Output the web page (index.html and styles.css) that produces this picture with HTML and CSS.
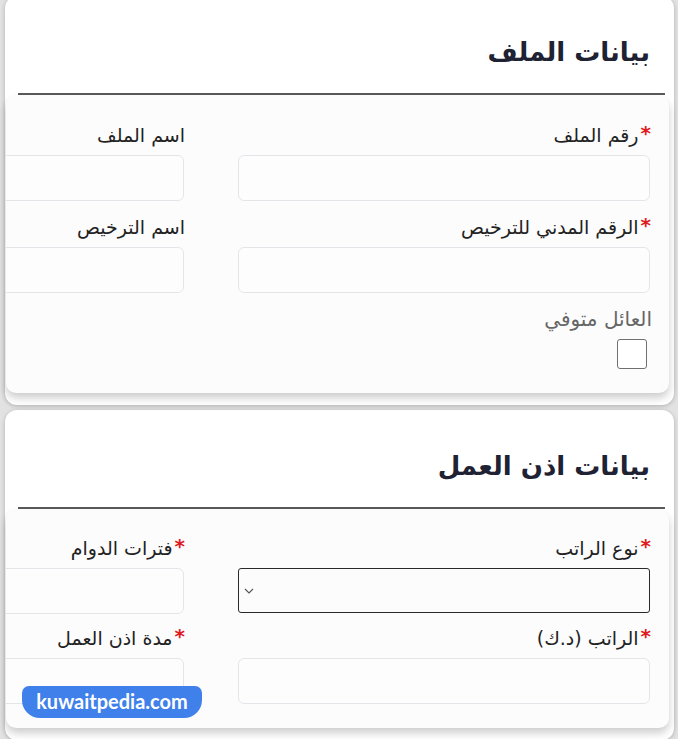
FILE: index.html
```html
<!DOCTYPE html>
<html lang="ar" dir="rtl">
<head>
<meta charset="utf-8">
<title>بيانات الملف</title>
<link rel="stylesheet" href="styles.css">
</head>
<body>
<main class="page">
  <section class="card card-first">
    <h2 class="card-title">بيانات الملف</h2>
    <div class="divider"></div>
    <div class="panel">
      <div class="grid">
        <div class="field">
          <label class="label"><span class="req">*</span>رقم الملف</label>
          <div class="input"></div>
        </div>
        <div class="field">
          <label class="label">اسم الملف</label>
          <div class="input"></div>
        </div>
        <div class="field">
          <label class="label"><span class="req">*</span>الرقم المدني للترخيص</label>
          <div class="input"></div>
        </div>
        <div class="field">
          <label class="label">اسم الترخيص</label>
          <div class="input"></div>
        </div>
        <div class="field">
          <label class="label muted">العائل متوفي</label>
          <div class="checkbox"></div>
        </div>
      </div>
    </div>
  </section>

  <section class="card">
    <h2 class="card-title">بيانات اذن العمل</h2>
    <div class="divider"></div>
    <div class="panel panel-last">
      <div class="grid grid-tight">
        <div class="field">
          <label class="label"><span class="req">*</span>نوع الراتب</label>
          <div class="select">
            <svg class="chevron" width="10" height="6" viewBox="0 0 10 6"><path d="M1 1 L5 5 L9 1" fill="none" stroke="#555" stroke-width="1.1"/></svg>
          </div>
        </div>
        <div class="field">
          <label class="label"><span class="req">*</span>فترات الدوام</label>
          <div class="input"></div>
        </div>
        <div class="field">
          <label class="label"><span class="req">*</span>الراتب (د.ك)</label>
          <div class="input"></div>
        </div>
        <div class="field">
          <label class="label"><span class="req">*</span>مدة اذن العمل</label>
          <div class="input"></div>
        </div>
      </div>
    </div>
  </section>

  <div class="watermark">kuwaitpedia.com</div>
</main>
</body>
</html>
```

FILE: styles.css
```css
html, body {
  margin: 0;
  padding: 0;
}
body {
  background: #e2e2e2;
  font-family: "DejaVu Sans", "Noto Sans", sans-serif;
  width: 678px;
  height: 739px;
  overflow: hidden;
}
.page {
  position: relative;
  display: flex;
  flex-direction: column;
  gap: 5px;
  height: 739px;
}
.card {
  background: #ffffff;
  margin: 0 4px 0 5px;
  border-radius: 12px;
  padding: 36px 0 12px 0;
  box-shadow: 0 1px 4px rgba(0, 0, 0, 0.22);
  display: flex;
  flex-direction: column;
}
.card-first {
  margin-top: -4px;
}
.card-title {
  margin: 0;
  padding-right: 24px;
  font-size: 26px;
  line-height: 40px;
  font-weight: bold;
  color: #1e2233;
}
.divider {
  height: 2px;
  background: #5a5a5a;
  margin: 21px 9px 1px 13px;
}
.panel {
  background: #fcfcfd;
  margin: 0 5px 0 1px;
  border-radius: 10px;
  box-shadow: 0 5px 9px rgba(0, 0, 0, 0.2);
  overflow: hidden;
  padding: 27px 19px 24px 0;
}
.panel-last {
  padding-top: 26px;
}
.grid {
  display: grid;
  grid-template-columns: 412px 412px;
  column-gap: 54px;
  row-gap: 14px;
  width: 878px;
}
.grid-tight {
  row-gap: 12px;
}
.field {
  display: flex;
  flex-direction: column;
}
.label {
  font-size: 19px;
  line-height: 24px;
  height: 24px;
  color: #222222;
  margin-bottom: 8px;
  margin-right: -1px;
  white-space: nowrap;
}
.label.muted {
  color: #666666;
  font-size: 20px;
  margin-right: -2px;
}
.req {
  color: #e01b1b;
  font-weight: bold;
  font-size: 20px;
  line-height: 0;
  vertical-align: 2px;
  margin-left: 2px;
}
.input {
  height: 44px;
  border: 1px solid #e3e5e9;
  border-radius: 6px;
  background: #fdfdfe;
}
.select {
  height: 43px;
  border: 1.5px solid #2a2a2a;
  border-radius: 3px;
  background: #fcfcfd;
  display: flex;
  align-items: center;
  justify-content: flex-end;
  padding-left: 5px;
}
.chevron {
  display: block;
}
.checkbox {
  width: 28px;
  height: 28px;
  border: 1px solid #707070;
  border-radius: 3px;
  background: #ffffff;
  margin-right: 3px;
}
.watermark {
  position: absolute;
  left: 22px;
  top: 686px;
  width: 180px;
  height: 32px;
  background: #3f80ea;
  border-radius: 7px 7px 18px 18px;
  color: #ffffff;
  font-family: Lato, "Open Sans", sans-serif;
  font-weight: bold;
  font-size: 20px;
  line-height: 31px;
  text-align: center;
  direction: ltr;
}
```
